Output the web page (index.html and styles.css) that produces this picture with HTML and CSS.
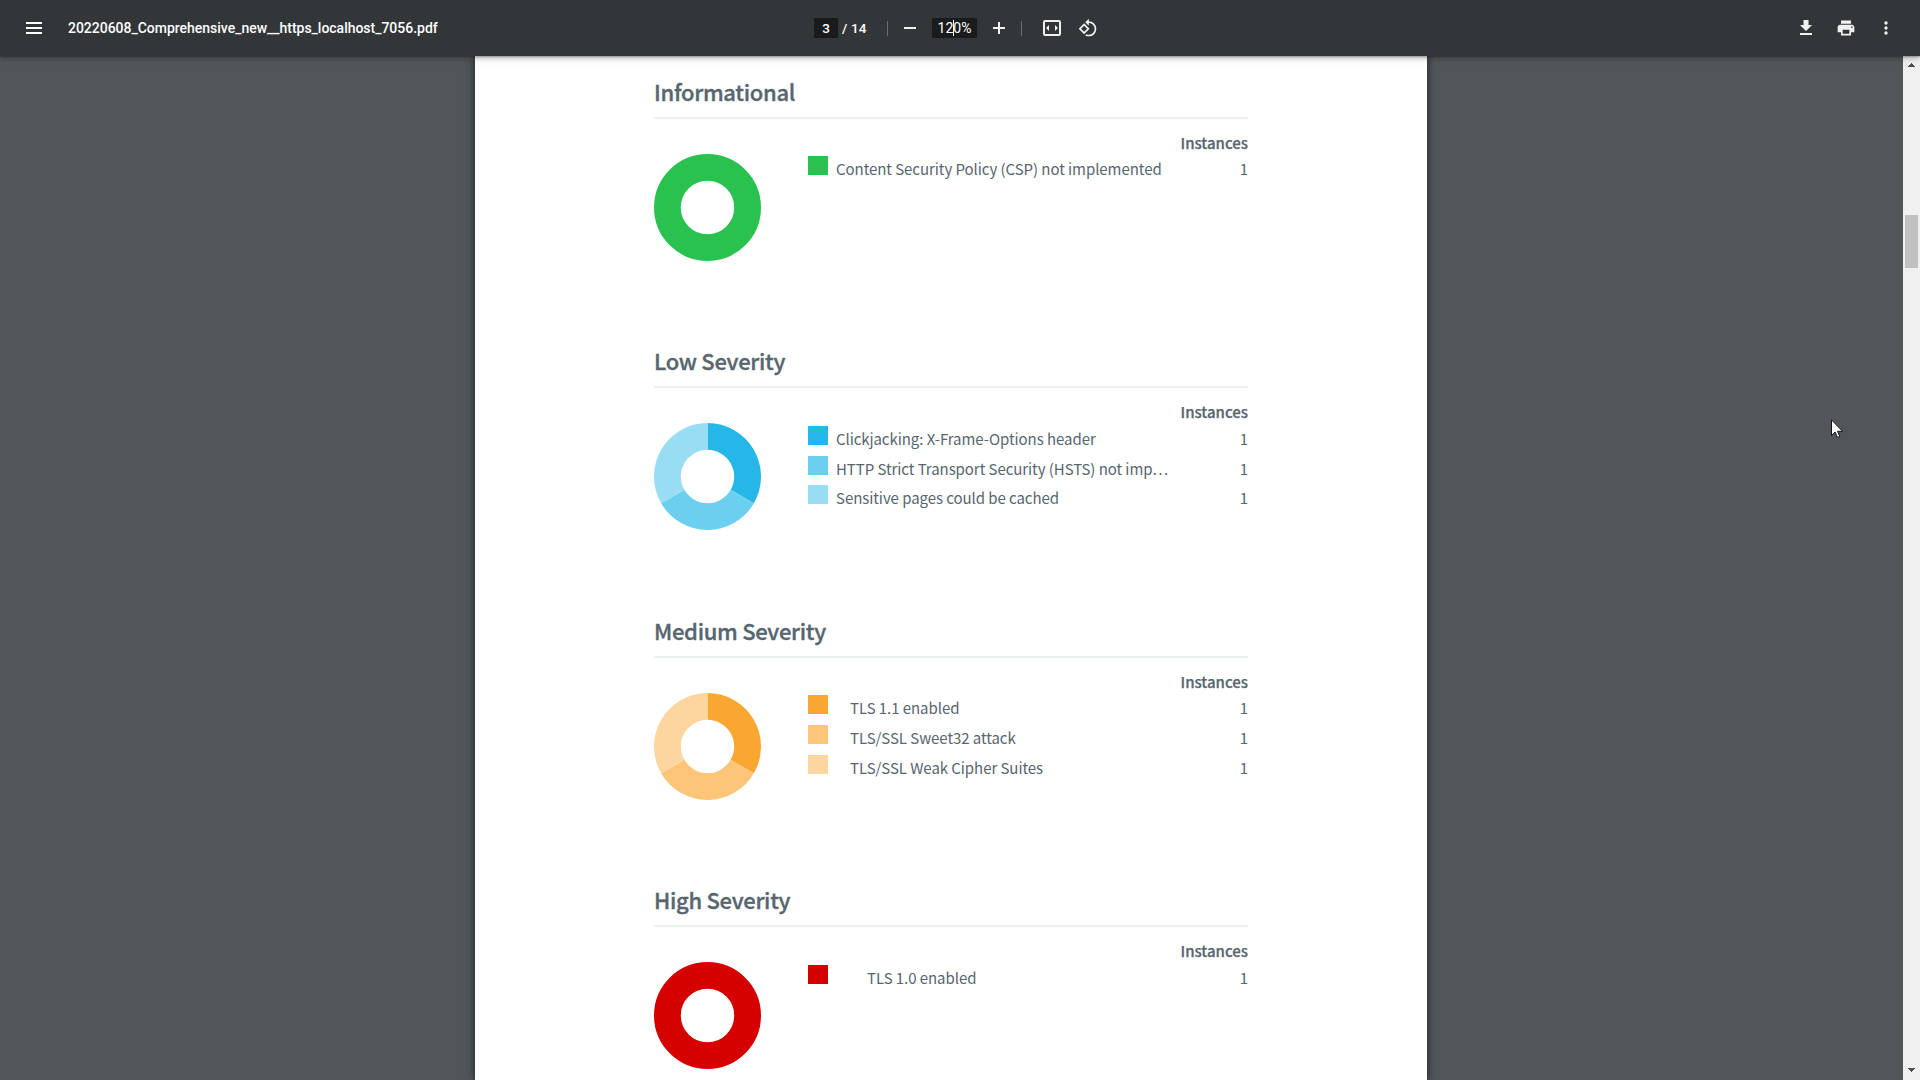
FILE: index.html
```html
<!DOCTYPE html>
<html lang="en">
<head>
<meta charset="utf-8">
<title>20220608_Comprehensive_new__https_localhost_7056.pdf</title>
<link rel="stylesheet" href="styles.css">
</head>
<body>
<header class="toolbar">
  <div class="toolbar-start">
    <svg class="icon" viewBox="0 0 24 24"><path d="M4 6h16v2H4zM4 11h16v2H4zM4 16h16v2H4z"/></svg>
    <span class="file-name">20220608_Comprehensive_new__https_localhost_7056.pdf</span>
  </div>
  <div class="toolbar-center">
    <span class="field page-field">3</span>
    <span class="page-count">/ 14</span>
    <span class="divider"></span>
    <svg class="icon icon-minus" viewBox="0 0 24 24"><path d="M6 11h12v2H6z"/></svg>
    <span class="field zoom-field">120%<span class="caret"></span></span>
    <svg class="icon icon-plus" viewBox="0 0 24 24"><path d="M6 11h5V6h2v5h5v2h-5v5h-2v-5H6z"/></svg>
    <span class="divider"></span>
    <svg class="icon icon-fit" viewBox="0 0 24 24"><path fill-rule="evenodd" d="M5 4h14a2 2 0 0 1 2 2v12a2 2 0 0 1-2 2H5a2 2 0 0 1-2-2V6a2 2 0 0 1 2-2zM5 6v12h14V6zM9 9v6l-3-3zM15 9v6l3-3z"/></svg>
    <svg class="icon icon-rotate" viewBox="0 0 24 24"><path d="M7.34 6.41.86 12.9l6.49 6.48 6.49-6.48-6.5-6.49zM3.69 12.9l3.66-3.66L11 12.9l-3.66 3.66-3.65-3.66zm15.67-6.26A8.95 8.95 0 0 0 13 4V.76L8.76 5 13 9.24V6c1.79 0 3.58.68 4.95 2.05a7.007 7.007 0 0 1 0 9.9 6.973 6.973 0 0 1-7.79 1.44l-1.49 1.49C10.02 21.62 11.51 22 13 22c2.3 0 4.61-.88 6.36-2.64a8.98 8.98 0 0 0 0-12.72z"/></svg>
  </div>
  <div class="toolbar-end">
    <svg class="icon icon-download" viewBox="0 0 24 24"><path d="M18 9h-3.5V4h-5v5H6l6 6zM6 17v2h12v-2z"/></svg>
    <svg class="icon icon-print" viewBox="0 0 24 24"><path d="M19 8H5c-1.66 0-3 1.34-3 3v6h4v4h12v-4h4v-6c0-1.66-1.34-3-3-3zm-3 11H8v-5h8v5zm3-7c-.55 0-1-.45-1-1s.45-1 1-1 1 .45 1 1-.45 1-1 1zm-1-9H6v4h12V3z"/></svg>
    <svg class="icon icon-more" viewBox="0 0 24 24"><circle cx="12" cy="6" r="2"/><circle cx="12" cy="12" r="2"/><circle cx="12" cy="18" r="2"/></svg>
  </div>
</header>
<div class="viewer">
  <main class="sheet">
    <section class="severity">
      <h2>Informational</h2>
      <div class="severity-body">
        <svg class="donut" viewBox="0 0 107 107"><circle class="ring green-1" cx="53.5" cy="53.5" r="40.1"/></svg>
        <div class="findings">
          <div class="findings-head">Instances</div>
          <div class="finding"><i class="swatch green-1"></i><span class="name">Content Security Policy (CSP) not implemented</span><span>1</span></div>
        </div>
      </div>
    </section>
    <section class="severity">
      <h2>Low Severity</h2>
      <div class="severity-body">
        <svg class="donut" viewBox="0 0 107 107"><path class="ring blue-1" d="M53.5 13.4A40.1 40.1 0 0 1 88.23 73.55"/><path class="ring blue-2" d="M88.23 73.55A40.1 40.1 0 0 1 18.77 73.55"/><path class="ring blue-3" d="M18.77 73.55A40.1 40.1 0 0 1 53.5 13.4"/></svg>
        <div class="findings">
          <div class="findings-head">Instances</div>
          <div class="finding"><i class="swatch blue-1"></i><span class="name">Clickjacking: X-Frame-Options header</span><span>1</span></div>
          <div class="finding"><i class="swatch blue-2"></i><span class="name">HTTP Strict Transport Security (HSTS) not imp…</span><span>1</span></div>
          <div class="finding"><i class="swatch blue-3"></i><span class="name">Sensitive pages could be cached</span><span>1</span></div>
        </div>
      </div>
    </section>
    <section class="severity medium">
      <h2>Medium Severity</h2>
      <div class="severity-body">
        <svg class="donut" viewBox="0 0 107 107"><path class="ring orange-1" d="M53.5 13.4A40.1 40.1 0 0 1 88.23 73.55"/><path class="ring orange-2" d="M88.23 73.55A40.1 40.1 0 0 1 18.77 73.55"/><path class="ring orange-3" d="M18.77 73.55A40.1 40.1 0 0 1 53.5 13.4"/></svg>
        <div class="findings">
          <div class="findings-head">Instances</div>
          <div class="finding"><i class="swatch orange-1"></i><span class="name">TLS 1.1 enabled</span><span>1</span></div>
          <div class="finding"><i class="swatch orange-2"></i><span class="name">TLS/SSL Sweet32 attack</span><span>1</span></div>
          <div class="finding"><i class="swatch orange-3"></i><span class="name">TLS/SSL Weak Cipher Suites</span><span>1</span></div>
        </div>
      </div>
    </section>
    <section class="severity high">
      <h2>High Severity</h2>
      <div class="severity-body">
        <svg class="donut" viewBox="0 0 107 107"><circle class="ring red-1" cx="53.5" cy="53.5" r="40.1"/></svg>
        <div class="findings">
          <div class="findings-head">Instances</div>
          <div class="finding"><i class="swatch red-1"></i><span class="name">TLS 1.0 enabled</span><span>1</span></div>
        </div>
      </div>
    </section>
  </main>
  <div class="scrollbar">
    <svg class="arrow" viewBox="0 0 7 4"><path d="M3 0h1v1h1v1h1v1h1v1H0V3h1V2h1V1h1z"/></svg>
    <div class="thumb"></div>
    <svg class="arrow" viewBox="0 0 7 4"><path d="M0 0h7v1H6v1H5v1H4v1H3V3H2V2H1V1H0z"/></svg>
  </div>
</div>
<svg class="cursor" viewBox="0 0 12 19"><path d="M.5.8v15.7l3.6-3.5 2.4 5.4 2.3-1-2.3-5.1h5z"/></svg>
</body>
</html>
```
FILE: styles.css
```css
* { box-sizing: border-box; }
body {
  margin: 0;
  height: 1080px;
  overflow: hidden;
  display: flex;
  flex-direction: column;
  background: #525659;
}

/* Toolbar */
.toolbar {
  flex: 0 0 56px;
  display: grid;
  grid-template-columns: 814px 1fr auto;
  align-items: center;
  background: #323639;
  color: #fff;
  font: 500 14px/20px Roboto, sans-serif;
  box-shadow: 0 -2px 8px rgba(0,0,0,.09), 0 4px 8px rgba(0,0,0,.06), 0 1px 2px rgba(0,0,0,.3), 0 2px 6px rgba(0,0,0,.15);
  z-index: 1;
}
.icon { width: 24px; height: 24px; fill: #f1f1f1; flex: none; }
.toolbar-start { display: flex; align-items: center; gap: 22px; padding-left: 22px; }
.toolbar-start .icon { fill: #fff; }
.file-name { letter-spacing: -.02px; }
.toolbar-center { display: flex; align-items: center; }
.field {
  height: 20px;
  background: #191b1c;
  text-align: center;
}
.page-field { width: 24px; margin-right: 4px; }
.zoom-field { width: 45px; position: relative; font-weight: 400; }
.caret { position: absolute; left: 21px; top: 2px; width: 1px; height: 16px; background: #fff; }
.page-count { width: 45px; letter-spacing: .15px; }
.page-field, .page-count { font-weight: 500; font-size: 13.5px; }
.divider { width: 1px; height: 15px; background: #6b6e70; margin-right: 10px; }
.icon-minus { margin-right: 10px; }
.icon-plus { margin: 0 10px; }
.icon-fit { width: 24px; height: 24px; margin: 0 14px 0 8px; }
.icon-rotate { width: 20px; height: 20px; }
.toolbar-end { display: flex; align-items: center; gap: 20px; padding-right: 24px; }
.icon-print, .icon-more { width: 20px; height: 20px; }
.icon-download { margin-right: -2px; }

/* Document */
.viewer { flex: 1; display: flex; justify-content: space-between; min-height: 0; }
.sheet {
  width: 952px;
  margin-left: 475px;
  padding: 19px 179px 0;
  background: #fff;
  box-shadow: 0 0 8px rgba(0,0,0,.7);
  color: #57666f;
  font: 400 15px/29.7px "Noto Sans CJK SC", sans-serif;
  overflow: hidden;
}
.severity { height: 269.4px; }
h2 {
  margin: 0;
  height: 44px;
  font-size: 22px;
  line-height: 32.6px;
  font-weight: 500;
  letter-spacing: -.3px;
  -webkit-text-stroke: .35px;
  border-bottom: 2px solid #ebf1f1;
}
.severity-body { display: flex; }
.donut { width: 107px; height: 107px; margin: 35px 47px 0 0; flex: none; }
.findings { flex: 1; padding-top: 9.75px; }
.findings-head {
  height: 25.7px;
  line-height: 28.8px;
  text-align: right;
  font-weight: 500;
  -webkit-text-stroke: .25px;
}
.finding { display: flex; height: 29.7px; line-height: 30.8px; }
.swatch { width: 20px; height: 19px; margin: 2px 8px 0 0; background: currentColor; }
.name { flex: 1; white-space: nowrap; letter-spacing: -.06px; }
.medium .name { padding-left: 14px; }
.high .name { padding-left: 31px; }

.ring { fill: none; stroke-width: 26.8; stroke: currentColor; }
.green-1 { color: #29c24f; }
.blue-1 { color: #24b7e7; }
.blue-2 { color: #6bcfef; }
.blue-3 { color: #99ddf3; }
.orange-1 { color: #faa732; }
.orange-2 { color: #fcc577; }
.orange-3 { color: #fcd59f; }
.red-1 { color: #d50000; }

/* Scrollbar */
.scrollbar {
  width: 17px;
  padding: 7px 0 8px;
  display: flex;
  flex-direction: column;
  align-items: center;
  background: #f0f0f0;
}
.arrow { width: 7px; height: 4px; fill: #505050; flex: none; margin-right: 1px; }
.thumb { width: 13px; height: 53px; margin: 148px 0 auto; background: #c1c1c1; }

.cursor {
  position: absolute;
  left: 1831px;
  top: 419px;
  width: 12px;
  height: 19px;
  fill: #fff;
  stroke: #10131c;
  z-index: 2;
}
```
